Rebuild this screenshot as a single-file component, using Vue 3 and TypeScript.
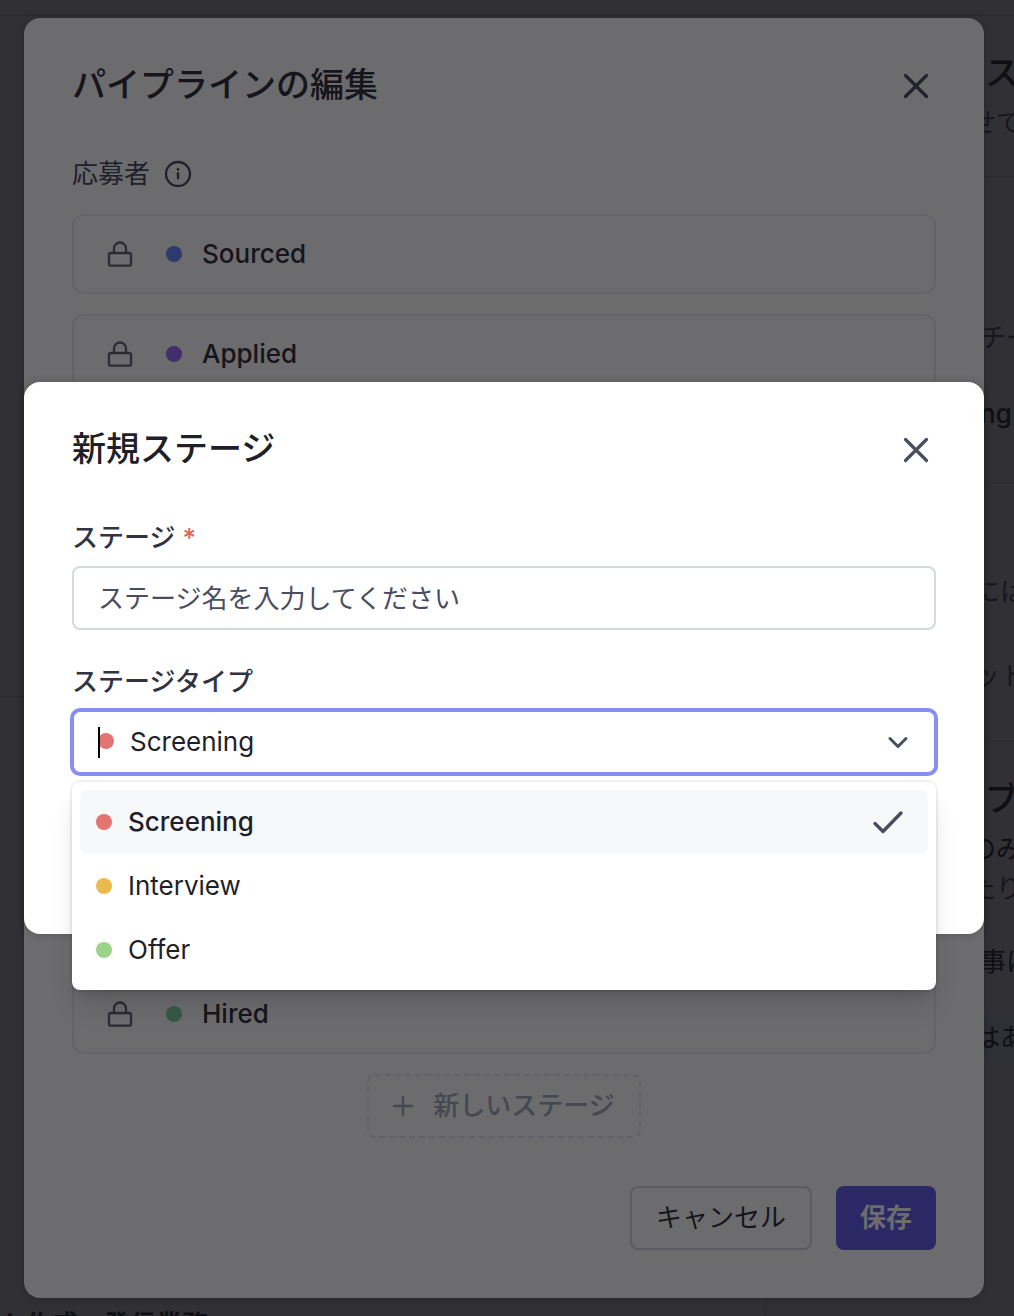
<script setup lang="ts">
import { computed, ref } from 'vue'

interface Stage {
  name: string
  tone: string
}

interface BackdropLine {
  text: string
  kind: string
}

const openingStages: Stage[] = [
  { name: 'Sourced', tone: 'blue' },
  { name: 'Applied', tone: 'purple' },
]
const closingStage: Stage = { name: 'Hired', tone: 'teal' }

const stageTypes: Stage[] = [
  { name: 'Screening', tone: 'red' },
  { name: 'Interview', tone: 'amber' },
  { name: 'Offer', tone: 'green' },
]

const stageName = ref('')
const selectedType = ref('Screening')
const selectedTone = computed(
  () => stageTypes.find((type) => type.name === selectedType.value)?.tone ?? 'red',
)

const sections: { id: string; lines: BackdropLine[] }[] = [
  {
    id: 'intro',
    lines: [
      { text: 'ス', kind: 'heading' },
      { text: 'せて', kind: 'body near' },
    ],
  },
  {
    id: 'team',
    lines: [
      { text: 'チー', kind: 'body far' },
      { text: 'ng', kind: 'strong far' },
    ],
  },
  {
    id: 'notes',
    lines: [
      { text: 'には', kind: 'body mid' },
      { text: 'ット', kind: 'body mid' },
    ],
  },
  {
    id: 'job',
    lines: [
      { text: 'ブ', kind: 'heading' },
      { text: 'のみ', kind: 'medium near' },
      { text: 'たり', kind: 'body near' },
      { text: '事に', kind: 'medium far' },
      { text: 'はあ', kind: 'medium mid band' },
    ],
  },
]
</script>

<template>
  <div class="screen">
    <div class="backdrop" aria-hidden="true">
      <div class="topbar"></div>
      <div class="columns">
        <div class="main-column">
          <div class="main-upper"></div>
          <div class="main-lower"></div>
          <p class="main-text">ト作成・発信業務</p>
        </div>
        <div class="side-column">
          <div v-for="section in sections" :key="section.id" class="section" :class="section.id">
            <p v-for="line in section.lines" :key="line.text" class="line" :class="line.kind">{{ line.text }}</p>
          </div>
        </div>
      </div>
    </div>

    <section class="dialog pipeline" aria-labelledby="pipeline-title">
      <header class="dialog-head">
        <h2 id="pipeline-title">パイプラインの編集</h2>
        <button class="close" type="button" aria-label="閉じる">
          <svg viewBox="0 0 40 40"><path d="M9.500 9.500l21 21M30.500 9.500l-21 21" /></svg>
        </button>
      </header>

      <div class="group-label">
        <span>応募者</span>
        <svg class="info" viewBox="0 0 28 28">
          <circle cx="14" cy="14" r="12" />
          <path d="M14 13.2v5.2" />
          <circle class="info-dot" cx="14" cy="9.4" r="1.3" />
        </svg>
      </div>

      <ul class="stages">
        <li v-for="stage in openingStages" :key="stage.name" class="stage">
          <svg class="lock" viewBox="0 0 32 32">
            <rect x="5" y="15" width="22" height="12.700" rx="2" />
            <path d="M10 15v-4.500a6 6 0 0 1 12 0V15" />
          </svg>
          <span class="dot" :class="stage.tone"></span>
          <span>{{ stage.name }}</span>
        </li>
        <li class="stage last">
          <svg class="lock" viewBox="0 0 32 32">
            <rect x="5" y="15" width="22" height="12.700" rx="2" />
            <path d="M10 15v-4.500a6 6 0 0 1 12 0V15" />
          </svg>
          <span class="dot" :class="closingStage.tone"></span>
          <span>{{ closingStage.name }}</span>
        </li>
      </ul>

      <button class="add-stage" type="button">
        <svg viewBox="0 0 20 20"><path d="M10 1v18M1 10h18" /></svg>
        <span>新しいステージ</span>
      </button>

      <footer class="actions">
        <button class="cancel" type="button">キャンセル</button>
        <button class="save" type="button">保存</button>
      </footer>
    </section>

    <div class="overlay">
      <section class="dialog new-stage" role="dialog" aria-labelledby="new-stage-title">
        <header class="dialog-head">
          <h2 id="new-stage-title">新規ステージ</h2>
          <button class="close" type="button" aria-label="閉じる">
            <svg viewBox="0 0 40 40"><path d="M9.500 9.500l21 21M30.500 9.500l-21 21" /></svg>
          </button>
        </header>

        <form class="form" @submit.prevent>
          <div class="field">
            <label for="stage-name">ステージ <span class="required">*</span></label>
            <input id="stage-name" v-model="stageName" type="text" placeholder="ステージ名を入力してください" />
          </div>

          <div class="field">
            <label for="stage-type">ステージタイプ</label>
            <div class="select-wrap">
              <select id="stage-type" v-model="selectedType">
                <option v-for="type in stageTypes" :key="type.name">{{ type.name }}</option>
              </select>
              <span class="dot select-dot" :class="selectedTone"></span>
              <span class="caret"></span>
              <svg class="chevron" viewBox="0 0 24 24"><path d="m4 8.500 8 8 8-8" /></svg>

              <div class="menu" role="listbox">
                <button
                  v-for="type in stageTypes"
                  :key="type.name"
                  class="option"
                  :class="{ active: type.name === selectedType }"
                  type="button"
                  role="option"
                  :aria-selected="type.name === selectedType"
                  @click="selectedType = type.name"
                >
                  <span class="dot" :class="type.tone"></span>
                  <span>{{ type.name }}</span>
                  <svg v-if="type.name === selectedType" class="check" viewBox="0 0 32 32">
                    <path d="m3 17.500 8 8L29 7" />
                  </svg>
                </button>
              </div>
            </div>
          </div>
        </form>
      </section>
    </div>
  </div>
</template>

<style>
body {
  background: #313035;
}
</style>

<style scoped>
* {
  box-sizing: border-box;
}

.screen {
  position: relative;
  min-height: 100vh;
  padding: 18px 30px 18px 24px;
  display: flex;
  overflow: hidden;
  background: #313035;
  color: #1f1f29;
  font-family: Inter, "Noto Sans CJK JP", sans-serif;
  font-size: 26px;
  line-height: 40px;
}

h2,
p,
ul {
  margin: 0;
  padding: 0;
}

button,
input,
select {
  font: inherit;
  color: inherit;
  margin: 0;
}

button {
  cursor: pointer;
}

svg {
  display: block;
  flex: none;
  fill: none;
  stroke: currentColor;
  stroke-width: 2.3;
  stroke-linecap: round;
  stroke-linejoin: round;
}

/* Dimmed page behind the dialogs */
.backdrop {
  position: absolute;
  inset: 0;
  overflow: hidden;
  display: flex;
  flex-direction: column;
  color: #17171c;
}

.topbar {
  flex: none;
  height: 16px;
  border-bottom: 2px solid #2d2c31;
}

.columns {
  flex: 1;
  min-height: 0;
  display: flex;
}

.main-column {
  flex: 1;
  min-width: 0;
  display: flex;
  flex-direction: column;
}

.main-upper {
  flex: none;
  height: 682px;
  border-bottom: 2px solid #2d2c31;
}

.main-lower,
.main-text {
  flex: none;
  margin-right: 200px;
  border-right: 2px solid #2d2c31;
}

.main-lower {
  height: 607px;
}

.main-text {
  font-weight: 600;
  color: #0f0f14;
}

.side-column {
  flex: none;
  width: 48px;
  overflow: hidden;
  white-space: nowrap;
}

.section {
  border-bottom: 2px solid #2d2c31;
}

.intro {
  height: 162px;
  padding-top: 33px;
}

.team {
  height: 306px;
  padding-top: 140px;
}

.notes {
  height: 258px;
  padding-top: 88px;
}

.job {
  padding-top: 33px;
  border: 0;
}

.line.heading {
  padding: 0 0 6px 19px;
  font-size: 34px;
  line-height: 48px;
  font-weight: 500;
  color: #0f0f14;
}

.line.strong,
.line.medium {
  color: #0f0f14;
}

.line.strong {
  font-weight: 500;
}

.line.near {
  padding-left: 4px;
}

.line.mid {
  padding-left: 8px;
}

.line.far {
  padding-left: 14px;
}

.team .strong {
  margin-top: 36px;
  padding-left: 14px;
}

.notes .line + .line {
  margin-top: 44px;
}

.job .far {
  margin-top: 33px;
}

.line.band {
  margin-top: 32px;
  line-height: 48px;
  background: #2e3035;
}

/* Dialogs */
.dialog {
  width: 100%;
  padding: 40px 48px 48px;
  border-radius: 16px;
}

.dialog-head {
  display: flex;
  align-items: flex-start;
  justify-content: space-between;
}

.dialog-head h2 {
  font-size: 34px;
  line-height: 54px;
  font-weight: 500;
}

.close {
  width: 40px;
  height: 40px;
  margin-top: 8px;
  padding: 0;
  border: 0;
  background: none;
  color: #4a4d60;
}

.close svg {
  stroke-width: 3.2;
}

.dot {
  flex: none;
  width: 16px;
  height: 16px;
  border-radius: 50%;
}

.blue {
  background: #2d3b6c;
}

.purple {
  background: #402f6c;
}

.teal {
  background: #365948;
}

.red {
  background: #e27571;
}

.amber {
  background: #e9bb4c;
}

.green {
  background: #99d488;
}

.pipeline {
  position: relative;
  display: flex;
  flex-direction: column;
  background: #6c6c6e;
  color: #15151b;
  box-shadow: 0 0 8px rgba(0, 0, 0, 0.2);
}

.pipeline .close {
  color: #23232d;
}

.group-label {
  display: flex;
  align-items: center;
  gap: 14px;
  margin-top: 42px;
  color: #1f202a;
}

.info {
  width: 28px;
  height: 28px;
}

.info-dot {
  fill: currentColor;
  stroke: none;
}

.stages {
  flex: 1;
  display: flex;
  flex-direction: column;
  gap: 20px;
  margin-top: 20px;
  list-style: none;
}

.stage {
  display: flex;
  align-items: center;
  height: 80px;
  padding: 0 30px;
  border: 2px solid #65646b;
  border-radius: 12px;
  font-weight: 500;
}

.stage.last {
  margin-top: auto;
}

.lock {
  width: 32px;
  height: 32px;
  margin-right: 30px;
  color: #2b2b35;
}

.stage .dot {
  margin-right: 20px;
}

.add-stage {
  align-self: center;
  display: flex;
  align-items: center;
  gap: 20px;
  height: 64px;
  margin-top: 20px;
  padding: 0 24px;
  border: 2px dashed #626168;
  border-radius: 8px;
  background: none;
  color: #46474f;
  font-weight: 500;
}

.add-stage svg {
  width: 20px;
  height: 20px;
}

.actions {
  display: flex;
  justify-content: flex-end;
  gap: 24px;
  margin-top: 48px;
}

.actions button {
  height: 64px;
  padding: 0 24px;
  border-radius: 8px;
}

.cancel {
  border: 2px solid #5c5b64;
  background: none;
}

.actions .save {
  border: 0;
  background: #2b2866;
  color: #6c6c6e;
  font-weight: 700;
}

.overlay {
  position: absolute;
  inset: 0;
  display: flex;
  align-items: center;
  padding: 0 30px 0 24px;
}

.new-stage {
  padding-bottom: 160px;
  background: #ffffff;
  box-shadow: 0 0 8px rgba(0, 0, 0, 0.2);
}

.form {
  display: flex;
  flex-direction: column;
  gap: 32px;
  margin-top: 42px;
}

.field {
  display: flex;
  flex-direction: column;
  gap: 8px;
}

.field label {
  color: #2f3343;
  font-weight: 500;
}

.required {
  color: #e2625c;
}

.field input {
  width: 100%;
  height: 64px;
  padding: 0 24px;
  border: 2px solid #d5dadf;
  border-radius: 8px;
  background: #ffffff;
  outline: none;
}

.field input::placeholder {
  color: #4a4d60;
  opacity: 1;
}

.select-wrap {
  position: relative;
}

.select-wrap select {
  display: block;
  width: 100%;
  height: 64px;
  padding: 0 56px;
  border: 2px solid #868ff5;
  border-radius: 8px;
  background: #ffffff;
  box-shadow: 0 0 0 2px #868ff5;
  outline: none;
  appearance: none;
}

.select-dot {
  position: absolute;
  left: 26px;
  top: 23px;
}

.caret {
  position: absolute;
  left: 26px;
  top: 17px;
  width: 2px;
  height: 31px;
  background: #000000;
}

.chevron {
  position: absolute;
  right: 26px;
  top: 20px;
  width: 24px;
  height: 24px;
  color: #4a4d60;
  stroke-width: 3;
  pointer-events: none;
}

.menu {
  position: absolute;
  top: 72px;
  left: 0;
  right: 0;
  padding: 8px;
  border-radius: 8px;
  background: #ffffff;
  box-shadow:
    0 0 0 2px rgba(0, 0, 0, 0.05),
    0 20px 30px -6px rgba(0, 0, 0, 0.12),
    0 8px 12px -4px rgba(0, 0, 0, 0.12);
}

.option {
  display: flex;
  align-items: center;
  gap: 16px;
  width: 100%;
  height: 64px;
  padding: 0 24px 0 16px;
  border: 0;
  border-radius: 8px;
  background: none;
  text-align: left;
}

.option.active {
  background: #f6f8fa;
  font-weight: 500;
}

.check {
  width: 32px;
  height: 32px;
  margin-left: auto;
  color: #4a4d60;
  stroke-width: 3.4;
}
</style>
